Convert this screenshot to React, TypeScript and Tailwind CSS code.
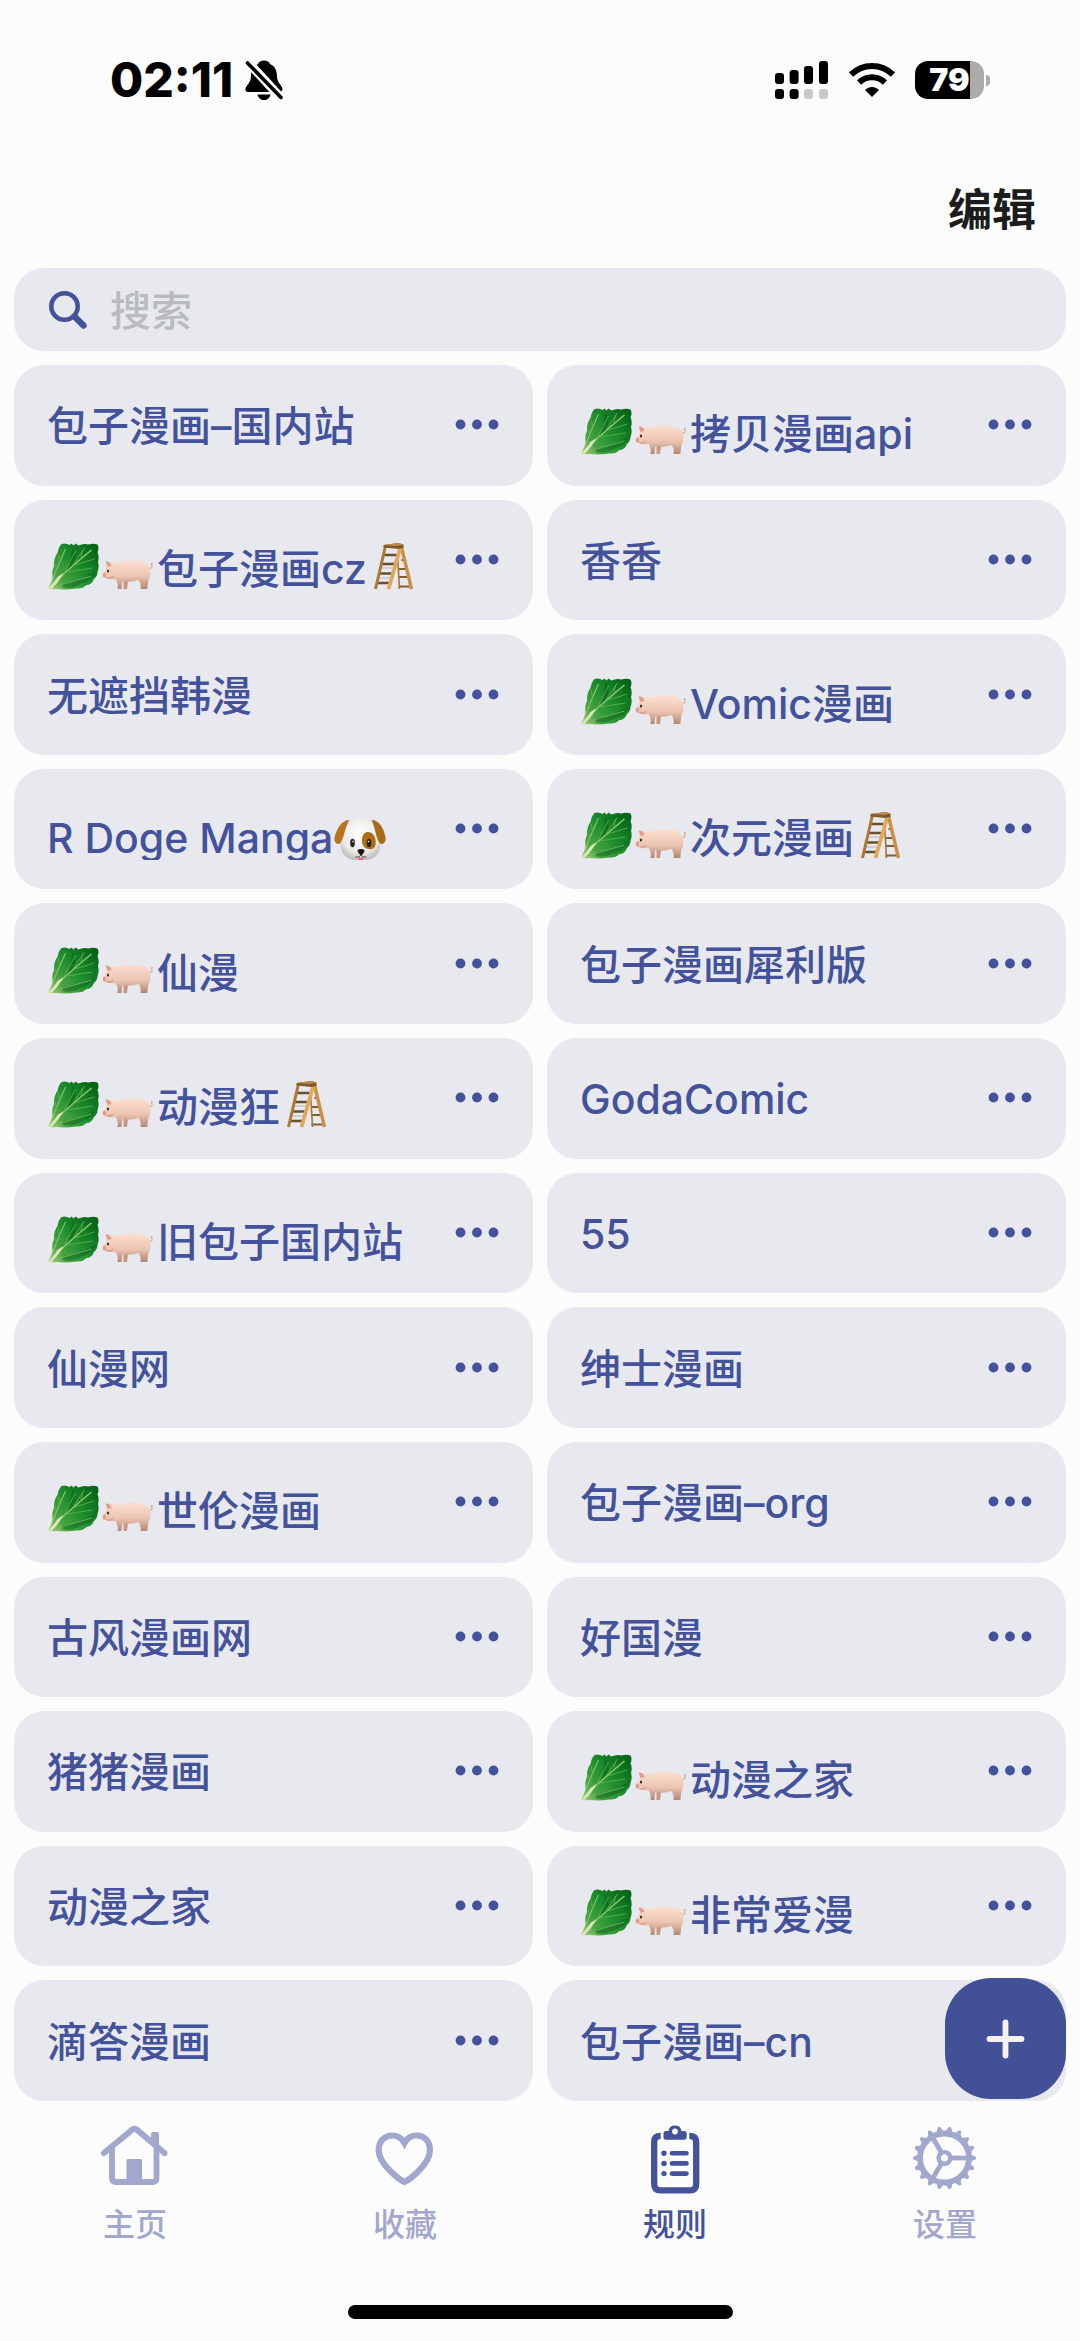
import { useState } from "react";
import type { ReactNode } from "react";

const RULES = [
  "包子漫画–国内站",
  "🥬🐖拷贝漫画api",
  "🥬🐖包子漫画cz🪜",
  "香香",
  "无遮挡韩漫",
  "🥬🐖Vomic漫画",
  "R Doge Manga🐶",
  "🥬🐖次元漫画🪜",
  "🥬🐖仙漫",
  "包子漫画犀利版",
  "🥬🐖动漫狂🪜",
  "GodaComic",
  "🥬🐖旧包子国内站",
  "55",
  "仙漫网",
  "绅士漫画",
  "🥬🐖世伦漫画",
  "包子漫画–org",
  "古风漫画网",
  "好国漫",
  "猪猪漫画",
  "🥬🐖动漫之家",
  "动漫之家",
  "🥬🐖非常爱漫",
  "滴答漫画",
  "包子漫画–cn",
];

const EMOJI = /(🥬|🐖|🪜|🐶)/u;

// Gradients shared by all emoji drawings
function EmojiDefs() {
  return (
    <svg className="absolute w-0 h-0" aria-hidden="true">
      <defs>
        <linearGradient id="leaf" x1="0" y1="1" x2="1" y2="0.2">
          <stop offset="0" stopColor="#b9d68a" />
          <stop offset="0.25" stopColor="#4aa544" />
          <stop offset="0.6" stopColor="#1b8c2c" />
          <stop offset="1" stopColor="#066518" />
        </linearGradient>
        <linearGradient id="pig" x1="0" y1="0" x2="0" y2="1">
          <stop offset="0" stopColor="#fadfd2" />
          <stop offset="0.55" stopColor="#edc5b2" />
          <stop offset="1" stopColor="#b08674" />
        </linearGradient>
        <radialGradient id="dog" cx="0.5" cy="0.35" r="0.65">
          <stop offset="0" stopColor="#ffffff" />
          <stop offset="0.7" stopColor="#ecebea" />
          <stop offset="1" stopColor="#bdb9b6" />
        </radialGradient>
      </defs>
    </svg>
  );
}

function Lettuce() {
  return (
    <>
      <path
        d="M0.5 45 Q5 40 5 34 Q4 28 6.5 23 Q6 15 10 10 Q11 4 14 1 Q18 -0.500 22 2 L24 0.500 L26 2.5 L28 0.500 L31 2.5 Q36 0 41 1.5 Q46 0 50 1.5 Q52 5 50 9 Q52 14 50.5 19 Q52 24 50 29 Q50 33 46.500 36 Q44 42 39 42 Q35 46 29 45.500 Q18 47 9 46 Q4 47 0.5 45Z"
        fill="url(#leaf)"
      />
      <path d="M25 4 Q30 12 27 20 L18 31 Q24 14 25 4Z" fill="#06591a" opacity="0.45" />
      <path d="M16 40 Q31 38 49 28 Q45 38 33 41 Q25 46 15 44Z" fill="#07601a" opacity="0.45" />
      <path d="M2 45 Q8 28 18 6" stroke="#8cc46d" strokeWidth="1.1" fill="none" />
      <path d="M2 45 Q16 30 44 7" stroke="#8fca72" strokeWidth="1.5" fill="none" />
      <path d="M2 45 Q20 40 44 33" stroke="#6fb058" strokeWidth="1" fill="none" />
      <path
        d="M16 31 L28 8 M24 24 L37 5 M27 22 L47 16 M19 29 L45 25 M33 17 L35 7 M9 29 L8 21 M12 21 L11 12"
        stroke="#63b24f"
        strokeWidth="0.8"
        fill="none"
      />
      <path d="M0.5 45 Q6 41 10 34 L16 30 Q12 38 4 46Z" fill="#dbe8b7" />
    </>
  );
}

function Pig() {
  return (
    <>
      <path d="M46 25 Q51 26 49 22 Q48 20 50.500 21" stroke="#e3ac97" strokeWidth="1.2" fill="none" />
      <path d="M21 34 h5 l-1.500 12 h-3.500z M41 32 l5 0 l-1 14 h-3z" fill="#c79782" />
      <path
        d="M6 20 Q10 17 13 20 Q27 16 38 18 Q48 20 48 30 Q48 34 46 37 Q44 41 44 46 H38 Q39 41 36 37 Q28 40 20 38 Q19 42 19 46 H15 Q16 40 13 36 Q8 37 4 35 Q-0.500 35 0.500 31 Q0.500 29 3 28 Q3 24 6 20Z"
        fill="url(#pig)"
      />
      <path d="M3 18.500 Q8 18 9 23 L5 24Z" fill="#e29d8a" />
      <ellipse cx="1.900" cy="32" rx="1.700" ry="2.600" fill="#dd9e8b" />
      <ellipse cx="5.500" cy="28" rx="1" ry="1.500" fill="#2e1d1a" />
      <path d="M4 35 Q8 36 11 33" stroke="#c58670" strokeWidth="0.8" fill="none" />
    </>
  );
}

function Ladder() {
  return (
    <>
      <path d="M12 25 H25 M10 35 H23" stroke="#b6b6b8" strokeWidth="1" />
      <path d="M34 17 H38 M31 26 H40 M31 34 H42 M31 43.500 H44" stroke="#7d6038" strokeWidth="2.200" />
      <path d="M30 12 L32 46" stroke="#a87535" strokeWidth="1.600" />
      <path d="M15 12 H29 M13 21 H27 M11 30.500 H25 M9 40 H23" stroke="#665030" strokeWidth="2.400" />
      <path d="M18 3 L8 46" stroke="#ad7736" strokeWidth="3" />
      <path d="M34 4 L44 46" stroke="#cb8f46" strokeWidth="3.400" />
      <path d="M33 4 L21 46" stroke="#e2a859" strokeWidth="3.800" />
      <path d="M16 2 L31 0 L36 1.500 V5 L31 6 L16 4.500Z" fill="#80592b" />
      <path d="M16 2 L31 0 L36 1.500 L30 3Z" fill="#bd8a4a" />
    </>
  );
}

function Dog() {
  return (
    <>
      <path d="M27 7 C38 7 42 14 44 22 C46 29 48 32 46 38 C44 45 36 49 27 49 C18 49 10 45 8 38 C6 32 8 29 10 22 C12 14 16 7 27 7Z" fill="url(#dog)" />
      <path d="M16 8 C8 8 4 16 1 25 C0 30 4 34 7 31 C11 25 11 16 16 8Z" fill="#b8751e" />
      <path d="M38 8 C46 8 50 16 52 25 C53 30 49 34 46 31 C42 25 42 16 38 8Z" fill="#a96a17" />
      <path d="M34 20 C41 20 43 28 42 33 C41 38 36 38 32 36 C27 33 27 21 34 20Z" fill="#b06c14" />
      <ellipse cx="19" cy="31" rx="2.300" ry="4.200" fill="#26211f" />
      <ellipse cx="35.500" cy="31" rx="2.300" ry="4.200" fill="#26211f" />
      <circle cx="19.500" cy="29.500" r="0.800" fill="#fff" />
      <circle cx="35" cy="29.500" r="0.800" fill="#fff" />
      <path d="M24 38 Q27.500 36 31 38 Q31 41 27.500 43.500 Q24 41 24 38Z" fill="#1b1717" />
      <path d="M27.500 43 Q26 46 22 45 M27.500 43 Q29 46 33 45" stroke="#4a3a36" strokeWidth="0.900" fill="none" />
      <path d="M24.500 45.500 H30.500 Q30 49 27.500 49 Q25 49 24.500 45.500Z" fill="#e8657c" />
    </>
  );
}

const EMOJI_ART: Record<string, ReactNode> = {
  "🥬": <Lettuce />,
  "🐖": <Pig />,
  "🪜": <Ladder />,
  "🐶": <Dog />,
};

function RuleCard({ name }: { name: string }) {
  const parts = name.split(EMOJI).filter(Boolean);
  const hasEmoji = parts.length > 1;

  return (
    <li className="flex items-center justify-between rounded-[30px] bg-[#e8e9ef] pl-[33px] pr-[34px] min-w-0">
      <a
        href="#rule"
        className="block h-[62px] flex-1 min-w-0 overflow-hidden text-[41px] font-medium text-[#43529a]"
      >
        <span
          className={`flex items-center whitespace-pre leading-[58px] ${hasEmoji ? "h-[78px]" : "h-[62px]"}`}
        >
          {parts.map((part, i) =>
            EMOJI_ART[part] ? (
              <svg
                key={i}
                role="img"
                aria-label={part}
                viewBox="0 0 54 50"
                className="w-[55px] h-[50px] shrink-0"
              >
                {EMOJI_ART[part]}
              </svg>
            ) : (
              <span key={i} className="pt-[2px]">
                {part}
              </span>
            )
          )}
        </span>
      </a>
      <button type="button" aria-label={`${name} 更多`} className="shrink-0 cursor-pointer">
        <svg viewBox="0 0 44 12" className="w-[44px] h-[12px]" fill="#43529a">
          <circle cx="5.500" cy="5.500" r="4.900" />
          <circle cx="22" cy="5.500" r="4.900" />
          <circle cx="38.500" cy="5.500" r="4.900" />
        </svg>
      </button>
    </li>
  );
}

function StatusBar() {
  return (
    <div className="flex items-center justify-between h-[44px] mt-[58px] pl-[110px] pr-[90px]">
      <div className="flex items-center gap-3">
        <span className="text-[48px] leading-[44px] font-extrabold text-black">02:11</span>
        <svg viewBox="0 0 38 42" className="w-[38px] h-[42px]">
          <path
            d="M19 1.500 C22 1.500 24 3 25 5 C30 7 32 12 32 17 C32 24 37 26 37.500 30 C37.500 32 36 33 34 33 H4 C1.500 33 0 32 0.500 30 C1 26 6 24 6 17 C6 12 8 7 13 5 C14 3 16 1.500 19 1.500Z"
            fill="#000"
          />
          <path d="M12.500 35.500 H25.500 C25 39 22 41 19 41 C16 41 13 39 12.500 35.500Z" fill="#000" />
          <path d="M0 0 L38 41" stroke="#fcfcfc" strokeWidth="9" />
          <path d="M2.500 4 L36 38.500" stroke="#000" strokeWidth="3.600" strokeLinecap="round" />
        </svg>
      </div>
      <div className="flex items-center">
        <svg viewBox="0 0 54 40" className="w-[54px] h-[40px] mr-5" fill="#000">
          <rect x="0" y="13" width="9" height="11" rx="3" />
          <rect x="14.600" y="10" width="9" height="14" rx="3" />
          <rect x="29" y="6" width="9" height="18" rx="3" />
          <rect x="44" y="1" width="9" height="23" rx="3" />
          <rect x="0" y="29" width="9" height="10" rx="3" />
          <rect x="14.600" y="29" width="9" height="10" rx="3" />
          <rect x="29" y="29" width="9" height="10" rx="3" fill="#c9c9c9" />
          <rect x="44" y="29" width="9" height="10" rx="3" fill="#c9c9c9" />
        </svg>
        <svg viewBox="0 0 46 36" className="w-[46px] h-[36px] mr-5" fill="none" stroke="#000">
          <path d="M2 12.500 C14 1 32 1 44 12.500" strokeWidth="6" />
          <path d="M10 20.500 C17.500 13.500 28.500 13.500 36 20.500" strokeWidth="6" />
          <path d="M23 35 L16 28 C20 24 26 24 30 28Z" fill="#000" stroke="none" />
        </svg>
        <div className="flex items-center gap-0.5">
          <div className="flex items-center justify-center w-[69px] h-[38px] rounded-[13px] bg-linear-to-r from-black from-79% to-[#ababab] to-79%">
            <span className="text-[32px] leading-[38px] font-black text-white">79</span>
          </div>
          <div className="w-1 h-[11px] rounded-r-full bg-[#ababab]" />
        </div>
      </div>
    </div>
  );
}

function HomeIcon() {
  return (
    <>
      <path d="M52 22 V11 Q52 9 54 9 H58 Q60 9 60 11 V28Z" fill="currentColor" stroke="none" />
      <path d="M13 25 V55 Q13 59 17 59 H53.500 Q57.500 59 57.500 55 V25" strokeWidth="5.800" />
      <path d="M5 30 L33.500 6.500 Q35.500 5.200 37.500 6.500 L65.500 30" strokeWidth="6" strokeLinecap="round" />
      <rect x="27.500" y="36" width="15.500" height="24" rx="1.500" fill="currentColor" stroke="none" />
    </>
  );
}

function HeartIcon() {
  return (
    <path
      d="M35.400 59 C32 57.500 9.700 42 9.700 27 C9.700 18 16 12.500 23 12.500 C28.500 12.500 33 15.500 35.400 20 C37.800 15.500 42.300 12.500 48 12.500 C55 12.500 61 18 61 27 C61 42 39 57.500 35.400 59Z"
      strokeWidth="6.200"
    />
  );
}

function ClipboardIcon() {
  return (
    <>
      <path
        d="M21.700 12.800 Q15.200 12.800 15.200 19 V61 Q15.200 67.400 21.500 67.400 H51 Q57.200 67.400 57.200 61 V19 Q57.200 12.800 50.300 12.800"
        strokeWidth="6.300"
      />
      <path
        fillRule="evenodd"
        d="M27 8 H29.500 A6.600 6.600 0 0 1 42.500 8 H45 Q47.700 8 47.700 10.500 V14 Q47.700 16.700 45 16.700 H27 Q24.500 16.700 24.500 14 V10.500 Q24.500 8 27 8Z M36 5.600 A2.900 2.900 0 1 0 36 11.400 A2.900 2.900 0 1 0 36 5.600Z"
        fill="currentColor"
        stroke="none"
      />
      {[30.3, 40.4, 50.6].map((y) => (
        <g key={y}>
          <circle cx="25" cy={y} r="2.700" fill="currentColor" stroke="none" />
          <path d={`M33 ${y} H47.500`} strokeWidth="4.600" strokeLinecap="round" />
        </g>
      ))}
    </>
  );
}

function GearIcon() {
  const teeth = Array.from({ length: 18 }, (_, i) => i * 20);
  return (
    <g transform="translate(35.500 35)">
      <circle r="24.500" strokeWidth="5.800" />
      {teeth.map((a) => (
        <path key={a} d="M26 -3.500 L31 -1.400 Q32 0 31 1.400 L26 3.500Z" transform={`rotate(${a})`} fill="currentColor" stroke="none" />
      ))}
      {[0, 120, 240].map((a) => (
        <path key={a} d="M6 0 H24" transform={`rotate(${a})`} strokeWidth="4.800" />
      ))}
      <circle r="5.900" strokeWidth="4.400" />
    </g>
  );
}

const TABS = [
  { label: "主页", icon: <HomeIcon /> },
  { label: "收藏", icon: <HeartIcon /> },
  { label: "规则", icon: <ClipboardIcon /> },
  { label: "设置", icon: <GearIcon /> },
];

export default function App() {
  const [active, setActive] = useState("规则");

  return (
    <div
      lang="zh-CN"
      className="min-h-screen flex flex-col bg-[#fcfcfc] font-[Inter,'Noto_Sans_CJK_SC',sans-serif]"
    >
      <EmojiDefs />
      <StatusBar />

      <header className="flex justify-end pt-[78px] pb-[28px] pr-[44px]">
        <button type="button" className="text-[44px] leading-[60px] font-bold text-[#1c1c1c] cursor-pointer">
          编辑
        </button>
      </header>

      <main className="relative flex-1 flex flex-col gap-[14px] px-[14px]">
        <label className="flex items-center gap-[22px] h-[83px] rounded-[30px] bg-[#e8e9ef] px-[34px]">
          <svg viewBox="0 0 40 40" className="w-[40px] h-[40px] shrink-0" fill="none" stroke="#43529a">
            <circle cx="16.500" cy="16.500" r="13.200" strokeWidth="4.600" />
            <path d="M26.500 26.500 L35.500 35.500" strokeWidth="6.400" strokeLinecap="round" />
          </svg>
          <input
            type="search"
            aria-label="搜索"
            placeholder="搜索"
            className="flex-1 min-w-0 pt-[2px] bg-transparent text-[41px] leading-[58px] font-medium text-[#43529a] placeholder:text-[#b9bbbf] outline-none"
          />
        </label>

        <ul className="flex-1 grid grid-cols-2 auto-rows-fr gap-[14px]">
          {RULES.map((name) => (
            <RuleCard key={name} name={name} />
          ))}
        </ul>

        {/* Floating add button, sits over the last card */}
        <button
          type="button"
          aria-label="添加"
          className="absolute right-[14px] bottom-[2px] w-[121px] h-[121px] rounded-[46px] bg-[#425197] flex items-center justify-center cursor-pointer"
        >
          <svg viewBox="0 0 40 40" className="w-[40px] h-[40px]" stroke="#f3f2f1" strokeWidth="5.800" strokeLinecap="round">
            <path d="M19.500 3.500 V36.500 M3.500 20 H35.500" />
          </svg>
        </button>
      </main>

      <nav className="grid grid-cols-4 pt-[22px]">
        {TABS.map((tab) => (
          <a
            key={tab.label}
            href="#tab"
            onClick={() => setActive(tab.label)}
            aria-current={tab.label === active ? "page" : undefined}
            className={`flex flex-col items-center gap-[10px] ${
              tab.label === active ? "text-[#43529a]" : "text-[#a1a7cd]"
            }`}
          >
            <svg viewBox="0 0 72 72" className="w-[72px] h-[72px]" fill="none" stroke="currentColor">
              {tab.icon}
            </svg>
            <span className="text-[32px] leading-[40px] font-medium">{tab.label}</span>
          </a>
        ))}
      </nav>
      <div className="w-[385px] h-[14px] mt-[60px] mb-[22px] mx-auto rounded-full bg-black" />
    </div>
  );
}
